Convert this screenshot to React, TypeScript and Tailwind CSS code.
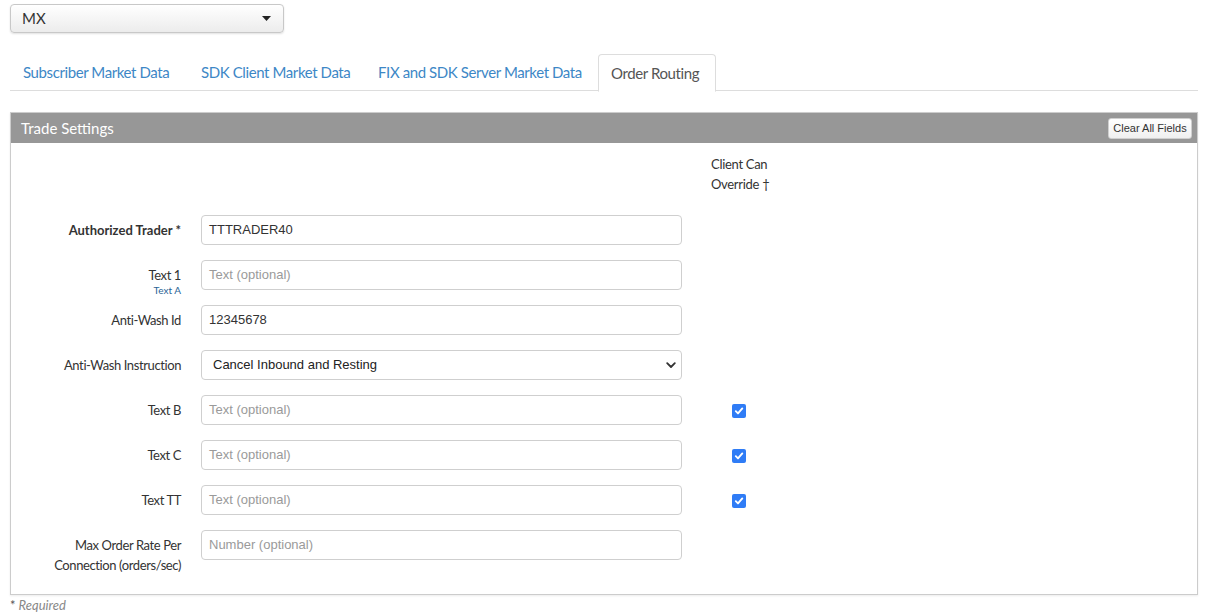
import React from "react";

const lato = { fontFamily: "Lato, 'Open Sans', sans-serif" };

function Check() {
  return (
    <div className="w-[14px] h-[14px] rounded-[2px] bg-[#2f7cf6] flex items-center justify-center">
      <svg width="10" height="10" viewBox="0 0 10 10">
        <path d="M1.8 5.2 L4 7.4 L8.3 2.4" fill="none" stroke="white" strokeWidth="1.9" strokeLinecap="round" strokeLinejoin="round" />
      </svg>
    </div>
  );
}

function TextInput({ value, placeholder }: { value?: string; placeholder?: string }) {
  return (
    <div className="w-[481px] h-[30px] border border-[#cfcfcf] rounded-[4px] bg-white flex items-center pl-[7px] text-[13px] font-['Liberation_Sans',Arial,sans-serif]">
      {value ? <span className="text-[#333]">{value}</span> : <span className="text-[#9a9a9a]">{placeholder}</span>}
    </div>
  );
}

function Row({
  label,
  bold,
  sub,
  children,
  check,
  twoLine,
}: {
  label: React.ReactNode;
  bold?: boolean;
  sub?: string;
  children: React.ReactNode;
  check?: boolean;
  twoLine?: boolean;
}) {
  return (
    <div className="flex items-start h-[30px] mb-[15px]">
      <div
        className={`w-[170px] h-[30px] text-right text-[#333] whitespace-nowrap text-[13px] ${twoLine ? "leading-[20px] pt-[5px]" : "leading-[16px] pt-[7px]"} ${bold ? "font-bold" : "tracking-[-0.4px]"}`}
        style={lato}
      >
        <div>{label}</div>
        {sub && <div className="text-[10px] leading-[12px] tracking-normal text-[#2a6496] mt-[1px]">{sub}</div>}
      </div>
      <div className="ml-[20px]">{children}</div>
      <div className="ml-[29px] w-[60px] h-[30px] flex items-center">
        {check && (
          <div className="ml-[21px] mt-[2px]">
            <Check />
          </div>
        )}
      </div>
    </div>
  );
}

export default function App() {
  return (
    <div className="w-[1205px] h-[616px] bg-white pl-[10px] pr-[7px] pt-[4px] overflow-hidden" style={lato}>
      {/* MX select */}
      <div className="w-[274px] h-[29px] rounded-[4px] border border-[#c8c8c8] bg-gradient-to-b from-white to-[#ececec] shadow-[0_1px_2px_rgba(0,0,0,0.12)] flex items-center justify-between pl-[11px] pr-[12px]">
        <span className="text-[15px] text-[#333]">MX</span>
        <svg width="9" height="5" viewBox="0 0 9 5">
          <path d="M0 0 L9 0 L4.5 5 Z" fill="#222" />
        </svg>
      </div>

      {/* Tabs */}
      <div className="mt-[21px] flex border-b border-[#dddddd] h-[37px] text-[15px] tracking-[-0.4px] whitespace-nowrap">
        <div className="w-[178px] px-[13px] flex items-center text-[#3d87c6]">Subscriber Market Data</div>
        <div className="w-[177px] px-[13px] flex items-center text-[#3d87c6]">SDK Client Market Data</div>
        <div className="w-[233px] px-[13px] flex items-center text-[#3d87c6]">FIX and SDK Server Market Data</div>
        <div className="w-[118px] px-[12px] flex items-center text-[#555] bg-white border border-[#dddddd] border-b-white rounded-t-[4px] h-[38px]">
          Order Routing
        </div>
      </div>

      {/* Panel */}
      <div className="mt-[21px] w-[1188px] border border-[#cccccc] shadow-[0_1px_2px_rgba(0,0,0,0.08)] h-[483px]">
        <div className="h-[30px] bg-[#979797] flex items-center justify-between pl-[10px] pr-[5px]">
          <span className="text-[15px] text-white">Trade Settings</span>
          <div className="w-[84px] h-[21px] rounded-[3px] border border-[#cfcfcf] bg-gradient-to-b from-white to-[#f0f0f0] flex items-center justify-center text-[11px] text-[#333] font-['Liberation_Sans',Arial,sans-serif]">
            Clear All Fields
          </div>
        </div>
        <div className="pt-[11px]">
          <div className="flex">
            <div className="ml-[700px] text-[13px] tracking-[-0.3px] leading-[20px] text-[#333]">
              <div>Client Can</div>
              <div>Override †</div>
            </div>
          </div>
          <div className="mt-[21px]">
            <Row label="Authorized Trader *" bold>
              <TextInput value="TTTRADER40" />
            </Row>
            <Row label="Text 1" sub="Text A">
              <TextInput placeholder="Text (optional)" />
            </Row>
            <Row label="Anti-Wash Id">
              <TextInput value="12345678" />
            </Row>
            <Row label="Anti-Wash Instruction">
              <div className="w-[481px] h-[30px] border border-[#cfcfcf] rounded-[4px] bg-white flex items-center justify-between pl-[11px] pr-[5px] text-[13px] text-[#222] font-['Liberation_Sans',Arial,sans-serif]">
                <span>Cancel Inbound and Resting</span>
                <svg width="10" height="7" viewBox="0 0 10 7">
                  <path d="M1.2 1.2 L5 5 L8.8 1.2" fill="none" stroke="#333" strokeWidth="1.8" strokeLinecap="round" strokeLinejoin="round" />
                </svg>
              </div>
            </Row>
            <Row label="Text B" check>
              <TextInput placeholder="Text (optional)" />
            </Row>
            <Row label="Text C" check>
              <TextInput placeholder="Text (optional)" />
            </Row>
            <Row label="Text TT" check>
              <TextInput placeholder="Text (optional)" />
            </Row>
            <Row
              label={
                <>
                  Max Order Rate Per
                  <br />
                  Connection (orders/sec)
                </>
              }
              twoLine
            >
              <TextInput placeholder="Number (optional)" />
            </Row>
          </div>
        </div>
      </div>
      <div className="mt-[1px] text-[13px] italic text-[#888]">
        <span className="text-[#555] not-italic">*</span> Required
      </div>
    </div>
  );
}
